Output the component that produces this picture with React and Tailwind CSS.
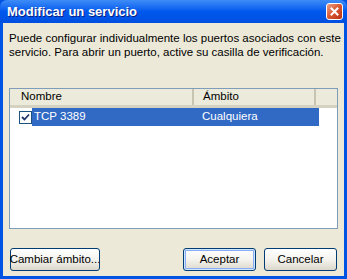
import React from "react";

function CloseButton() {
  return (
    <div className="w-[17px] h-[17px] rounded-[3px] border border-white bg-gradient-to-br from-[#e8a088] via-[#d9542f] to-[#b83210] flex items-center justify-center">
      <svg width="9" height="9" viewBox="0 0 9 9">
        <path d="M1.5 1.5 L7.5 7.5 M7.5 1.5 L1.5 7.5" stroke="white" strokeWidth="2" strokeLinecap="square" />
      </svg>
    </div>
  );
}

function XpButton({ children, focused, className }) {
  return (
    <div
      className={
        "h-[23px] rounded-[3px] border border-[#003c74] bg-gradient-to-b from-white via-[#f4f3ee] to-[#dcd8cc] flex items-center justify-center whitespace-nowrap text-[11.5px] text-black " +
        (focused ? "shadow-[inset_0_0_0_1px_#cee7ff,inset_0_0_0_2px_#89adf4] " : "") +
        className
      }
    >
      {children}
    </div>
  );
}

export default function App() {
  return (
    <div
      className="w-[347px] h-[279px] flex flex-col bg-[#0054e3] overflow-hidden"
      style={{ fontFamily: "Tahoma, 'Liberation Sans', 'DejaVu Sans', sans-serif" }}
    >
      {/* TITLE BAR */}
      <div className="h-[23px] shrink-0 rounded-t-[7px] bg-gradient-to-b from-[#3d8cf7] via-[#0058ee] to-[#0050e0] flex items-center pl-[7px] pr-[4px]">
        <span className="text-white font-bold text-[13px] [text-shadow:1px_1px_0_#0a1e80]">
          Modificar un servicio
        </span>
        <div className="ml-auto">
          <CloseButton />
        </div>
      </div>

      {/* BODY */}
      <div className="flex-1 mx-[3px] mb-[3px] bg-[#ece9d8] flex flex-col px-[6px] pt-[8px] pb-[5px]">
        <p className="text-[11.5px] leading-[14px] text-black whitespace-nowrap">
          Puede configurar individualmente los puertos asociados con este
          <br />
          servicio. Para abrir un puerto, active su casilla de verificación.
        </p>

        {/* LIST */}
        <div className="mt-[29px] h-[141px] border border-[#7f9db9] bg-white flex flex-col">
          <div className="h-[19px] bg-[#ebeadb] border-b-[3px] border-[#d6d2c2] flex text-[11.5px] text-black">
            <div className="w-[184px] pl-[11px] flex items-center border-r-[2px] border-r-[#c7c5b2]">Nombre</div>
            <div className="w-[122px] pl-[9px] flex items-center border-r-[2px] border-r-[#c7c5b2]">Ámbito</div>
            <div className="flex-1" />
          </div>
          <div className="h-[18px] flex items-center pl-[9px] text-[11.5px]">
            <div className="w-[13px] h-[13px] border border-[#1c5180] bg-white flex items-center justify-center shrink-0">
              <svg width="9" height="9" viewBox="0 0 9 9">
                <path d="M1 4 L3.5 6.5 L8 1.5" stroke="#21346e" strokeWidth="1.8" fill="none" />
              </svg>
            </div>
            <div className="w-[287px] h-[18px] bg-[#316ac5] text-white flex items-center">
              <span className="w-[170px] pl-[2px]">TCP 3389</span>
              <span>Cualquiera</span>
            </div>
          </div>
        </div>

        {/* BUTTONS */}
        <div className="mt-auto flex items-center">
          <XpButton className="w-[90px] ml-[1px]">Cambiar ámbito...</XpButton>
          <XpButton focused className="w-[73px] ml-auto">Aceptar</XpButton>
          <XpButton className="w-[73px] ml-[8px] mr-[1px]">Cancelar</XpButton>
        </div>
      </div>
    </div>
  );
}
